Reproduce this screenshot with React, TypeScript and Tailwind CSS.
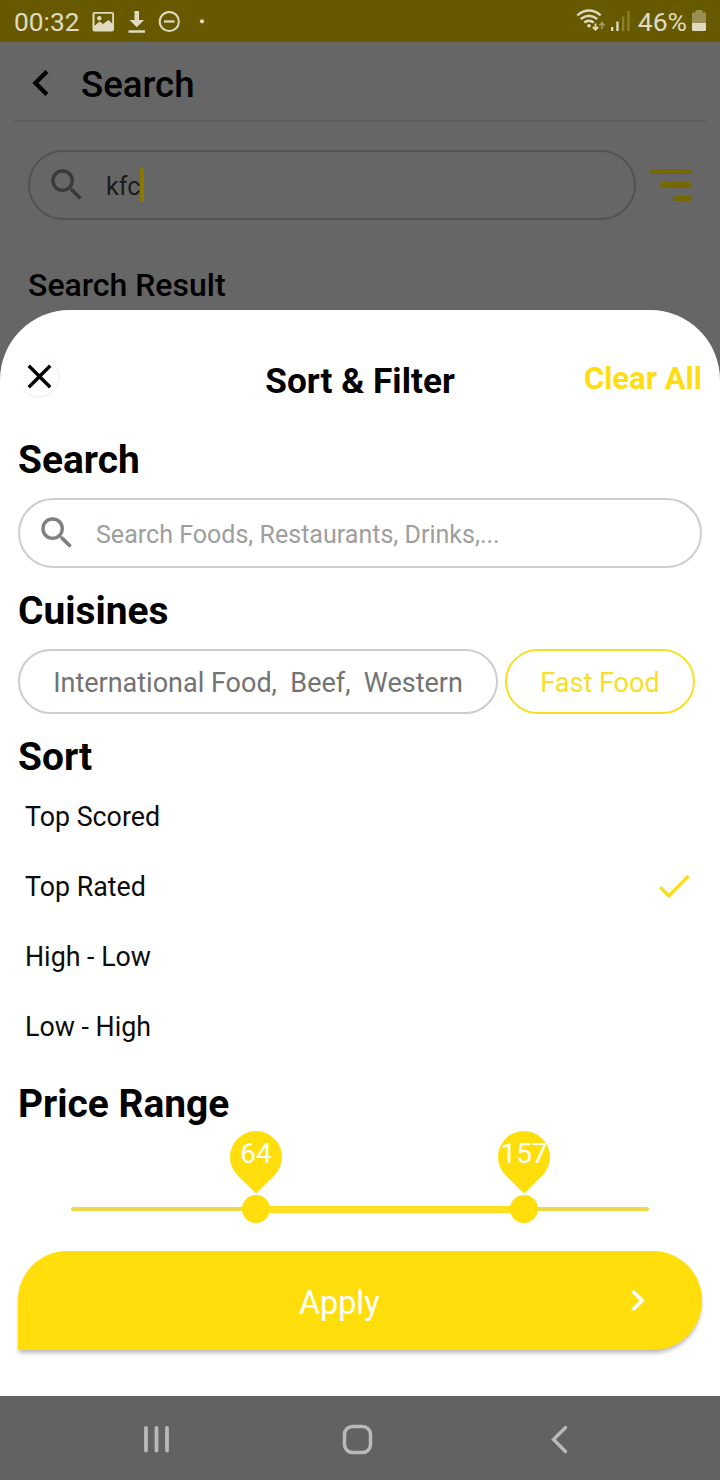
import React from "react";
import { MdCheck, MdChevronLeft, MdChevronRight, MdClose, MdSearch } from "react-icons/md";

function StatusBar() {
  return (
    <div className="flex h-[42px] items-center bg-[#665900] pl-[14px] pr-[13px] text-[#e0dbc0]">
      <span className="w-[78px] pt-[2px] text-[26.3px] leading-[40px]">00:32</span>
      <svg className="h-[42px] w-[120px]" viewBox="92 0 120 42" fill="none">
        <path
          fill="currentColor"
          fillRule="evenodd"
          d="M94.5 12h17.500a2 2 0 0 1 2 2v15.500a2 2 0 0 1-2 2H94.500a2 2 0 0 1-2-2V14a2 2 0 0 1 2-2Zm0 1.700V26l5-4.500 3.500 2.500 5.500-4 3.700 3.500V13.700ZM99.300 16a2.200 2.200 0 1 1 0 4.400 2.200 2.200 0 0 1 0-4.400Z"
        />
        <path fill="currentColor" d="M134.500 11h4.500v9h5l-7.200 7.300-7.300-7.300h5ZM128.500 30.300H145v2.400h-16.500Z" />
        <circle cx="169.300" cy="21.500" r="9.600" stroke="currentColor" strokeWidth="2" />
        <path d="M164 21.500h10.600" stroke="currentColor" strokeWidth="2.200" />
        <circle cx="202" cy="21.300" r="2.100" fill="currentColor" />
      </svg>
      <svg className="ml-auto h-[42px] w-[56px]" viewBox="576 0 56 42" fill="none">
        <g stroke="currentColor" strokeWidth="2.300">
          <path d="M577.300 15.300q11.700-9.500 23.400 0" />
          <path d="M580.700 19q8.300-6.600 16.600 0" />
          <path d="M584.300 22.500q4.700-3.600 9.400 0" />
        </g>
        <circle cx="589" cy="25.700" r="1.800" fill="currentColor" />
        <path d="M595.500 23.500v6m-2.700-2.500 2.700 2.700 2.700-2.700" stroke="currentColor" strokeWidth="1.800" />
        <path d="M602 29v-6m-2.700 2.500 2.700-2.700 2.700 2.700" stroke="#a39b61" strokeWidth="1.700" />
        <path d="M611 27h2.300v4H611ZM616.300 21.500h2.300V31h-2.300Z" fill="currentColor" />
        <path d="M622 16.500h2.300V31H622ZM627.300 11h2.300v20h-2.300Z" fill="#8c822c" />
      </svg>
      <span className="ml-[6px] pt-[2px] text-[26.5px] leading-[40px]">46%</span>
      <svg className="ml-[4px] h-[42px] w-[16px]" viewBox="691 0 16 42">
        <path fill="#999052" d="M692 12.500h3.500V10h7v2.500h3.500V23h-14Z" />
        <path fill="currentColor" d="M692 23h14v6.500a1.500 1.500 0 0 1-1.500 1.500h-11a1.500 1.500 0 0 1-1.500-1.500Z" />
      </svg>
    </div>
  );
}

function DimmedPage() {
  return (
    <div className="h-[268px] bg-[#666666]">
      <div className="mx-[14px] flex h-[80px] items-center border-b-2 border-[#5c5c5c] pt-[3px]">
        <MdChevronLeft className="ml-[0.500px] size-[52px] shrink-0 text-black" />
        <h1 className="ml-[14.500px] pt-[4px] text-[36.6px] font-medium leading-[42px] text-black">Search</h1>
      </div>
      <div className="ml-[28px] mt-[28px] flex h-[70px] items-center">
        <div className="flex h-[70px] w-[608px] items-center rounded-[35px] border-2 border-[#525252] pl-[16px]">
          <MdSearch className="size-[42px] text-[#3a3a3a]" />
          <span className="ml-[18px] w-[34px] pt-[3px] text-[25.3px] leading-[30px] text-[#1a1a1a]">kfc</span>
          <span className="h-[34px] w-[4px] bg-[#8a7900]" />
        </div>
        <div className="ml-[14px] flex w-[42px] flex-col items-end gap-[8px]">
          <span className="h-[5px] w-full rounded-full bg-[#766800]" />
          <span className="h-[6px] w-[32px] rounded-full bg-[#766800]" />
          <span className="h-[5px] w-[19px] rounded-full bg-[#766800]" />
        </div>
      </div>
      <h2 className="ml-[28px] mt-[45px] text-[32px] font-medium leading-[40px] text-black">Search Result</h2>
    </div>
  );
}

function Title({ children }: { children: React.ReactNode }) {
  return <h3 className="text-[38.900px] font-bold leading-[46px] text-black">{children}</h3>;
}

const sortOptions = ["Top Scored", "Top Rated", "High - Low", "Low - High"];

function Thumb({ value, left }: { value: number; left: number }) {
  return (
    <div className="absolute top-0 w-[52px]" style={{ left }}>
      <svg className="h-[92px] w-[52px]" viewBox="0 0 52 92" fill="#ffde0b">
        <path d="M26 62.500 7.600 44.400A26 26 0 1 1 44.400 44.400Z" />
        <circle cx="26" cy="78" r="14" />
      </svg>
      <span className="absolute inset-x-0 top-[6px] text-center text-[28px] leading-[34px] text-white">{value}</span>
    </div>
  );
}

function FilterSheet() {
  return (
    <div className="bg-[#666666]">
      <div className="h-[1086px] rounded-t-[70px] bg-white px-[18px] pt-[46px]">
        <div className="grid h-[42px] grid-cols-[1fr_auto_1fr] items-start">
          <button className="flex size-[42px] items-center justify-center rounded-full border-b-2 border-r-2 border-[#f3f3f3] text-black">
            <MdClose className="ml-[2px] mt-px size-[41px] shrink-0" />
          </button>
          <h2 className="pt-[4px] text-[35.200px] font-bold leading-[42px] text-black">Sort &amp; Filter</h2>
          <button className="justify-self-end pt-[3px] text-[31px] font-bold leading-[40px] text-[#ffdd10]">Clear All</button>
        </div>

        <div className="mt-[39px]">
          <Title>Search</Title>
        </div>
        <div className="mt-[15px] flex h-[70px] items-center rounded-[35px] border-2 border-[#cecccd] pl-[16px]">
          <MdSearch className="size-[42px] text-[#808080]" />
          <span className="ml-[18px] pt-[3px] text-[25.050px] leading-[30px] text-[#9e9e9e]">
            Search Foods, Restaurants, Drinks,...
          </span>
        </div>

        <div className="mt-[20px]">
          <Title>Cuisines</Title>
        </div>
        <div className="mt-[15px] flex gap-[7px]">
          <span className="flex h-[65px] w-[480px] items-center justify-center whitespace-pre rounded-[33px] border-2 border-[#cecccd] pt-[3px] text-[27px] text-[#737373]">
            {"International Food,  Beef,  Western"}
          </span>
          <span className="flex h-[65px] w-[190px] items-center justify-center rounded-[33px] border-2 border-[#f8de27] pt-[3px] text-[27px] text-[#f8de27]">
            Fast Food
          </span>
        </div>

        <div className="mt-[20px]">
          <Title>Sort</Title>
        </div>
        <ul className="mt-[2px]">
          {sortOptions.map((option) => (
            <li key={option} className="flex h-[70px] items-center justify-between pl-[7px] pr-[7px] text-[26.800px] text-[#0c0c0c]">
              {option}
              {option === "Top Rated" && <MdCheck className="mb-[2px] size-[42px] text-[#ffdd17]" />}
            </li>
          ))}
        </ul>

        <div className="mt-[19px]">
          <Title>Price Range</Title>
        </div>
        <div className="relative mt-[4px] h-[92px]">
          <div className="absolute left-[53px] top-[76px] h-[4px] w-[578px] rounded-full bg-[#eed846]" />
          <div className="absolute left-[238px] top-[75px] h-[7px] w-[268px] bg-[#ffdf20]" />
          <Thumb value={64} left={212} />
          <Thumb value={157} left={480} />
        </div>

        <button className="mt-[28px] flex h-[99px] w-full items-center rounded-r-[49px] rounded-tl-[49px] bg-[#ffde0b] text-white shadow-[0_4px_4px_-1px_rgba(0,0,0,0.28)]">
          <span className="ml-[281px] pt-[4px] text-[32.300px] leading-[40px]">Apply</span>
          <MdChevronRight className="ml-auto mr-[43px] size-[43px]" />
        </button>
      </div>
    </div>
  );
}

function NavigationBar() {
  return (
    <div className="h-[84px] bg-[#626262]">
      <svg className="block h-[84px] w-[720px]" viewBox="0 1396 720 84" fill="none" stroke="#b9b9b9" strokeLinecap="round">
        <path d="M146 1428v22.500M156.500 1428v22.500M167 1428v22.500" strokeWidth="3.800" />
        <rect x="344.500" y="1426.500" width="26" height="26" rx="8" strokeWidth="3.500" />
        <path d="m565.500 1427.500-12 12 12 12" strokeWidth="3.400" />
      </svg>
    </div>
  );
}

export default function App() {
  return (
    <main className="h-[1480px] w-[720px] overflow-hidden bg-white font-['Roboto',sans-serif]">
      <StatusBar />
      <DimmedPage />
      <FilterSheet />
      <NavigationBar />
    </main>
  );
}
